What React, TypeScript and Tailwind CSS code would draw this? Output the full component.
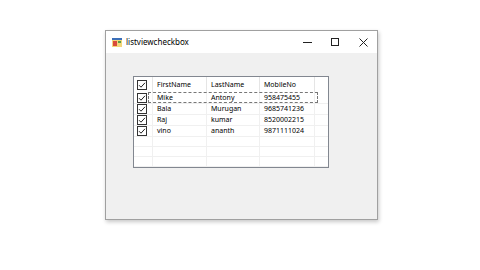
import React from 'react';

const rows = [
  ['Mike', 'Antony', '958475455'],
  ['Bala', 'Murugan', '9685741236'],
  ['Raj', 'kumar', '8520002215'],
  ['vino', 'ananth', '9871111024'],
];

const COLS = ['w-[19px]', 'w-[54px]', 'w-[53px]', 'w-[55px]'];

function Check() {
  return (
    <svg width="10" height="10" viewBox="0 0 10 10" className="block">
      <rect x="0.5" y="0.5" width="9" height="9" fill="#fff" stroke="#333" />
      <path d="M2 5.2 L4 7.2 L8 2.8" fill="none" stroke="#222" strokeWidth="1" />
    </svg>
  );
}

function Row({ cells, focus }: { cells: string[]; focus?: boolean }) {
  return (
    <div className="flex h-[11px] border-b border-[#f0f0f0] relative">
      <div className={`${COLS[0]} shrink-0 border-r border-[#f0f0f0] flex items-center pl-[3px]`}>
        <Check />
      </div>
      {cells.map((c, i) => (
        <div key={i} className={`${COLS[i + 1]} shrink-0 border-r border-[#f0f0f0] pl-[4px] leading-[10px] flex items-center`}>
          {c}
        </div>
      ))}
      {focus && (
        <div className="absolute left-[14px] top-[-1px] w-[170px] h-[11px] border border-dashed border-[#777]" />
      )}
    </div>
  );
}

function EmptyRow() {
  return (
    <div className="flex h-[10px] border-b border-[#f0f0f0]">
      {COLS.map((w, i) => (
        <div key={i} className={`${w} shrink-0 border-r border-[#f0f0f0]`} />
      ))}
    </div>
  );
}

export default function App() {
  return (
    <div
      className="w-[480px] h-[270px] bg-white pl-[105px] pt-[30px]"
      style={{ fontFamily: '"Noto Sans", "Open Sans", sans-serif' }}
    >
      <div className="w-[273px] h-[190px] border border-[#a0a0a0] bg-[#f0f0f0] shadow-[1px_2px_4px_rgba(0,0,0,0.22)] flex flex-col">
        {/* title bar */}
        <div className="h-[22px] bg-white flex items-center shrink-0">
          <svg width="10" height="9" viewBox="0 0 10 9" className="ml-[6px]">
            <rect x="0" y="0" width="10" height="9" fill="#f3d67a" />
            <rect x="0" y="0" width="10" height="2" fill="#3c6fb8" />
            <rect x="1" y="3" width="4" height="5" fill="#d94a3a" />
            <rect x="6" y="3" width="3" height="2" fill="#5a9e4a" />
          </svg>
          <span className="ml-[4px] text-[8px] text-black">listviewcheckbox</span>
          <div className="ml-auto flex h-full">
            <div className="w-[28px] flex items-center justify-center">
              <div className="w-[9px] h-px bg-[#222]" />
            </div>
            <div className="w-[28px] flex items-center justify-center">
              <div className="w-[8px] h-[8px] border border-[#222]" />
            </div>
            <div className="w-[28px] flex items-center justify-center">
              <svg width="9" height="9" viewBox="0 0 9 9">
                <path d="M0.5 0.5 L8.5 8.5 M8.5 0.5 L0.5 8.5" stroke="#222" strokeWidth="1" />
              </svg>
            </div>
          </div>
        </div>
        {/* body */}
        <div className="pl-[27px] pt-[23px]">
          <div className="w-[196px] h-[92px] border border-[#828790] bg-white overflow-hidden text-[7px] text-black">
            <div className="flex h-[16px]">
              <div className={`${COLS[0]} shrink-0 border-r border-[#e5e5e5] flex items-center pl-[3px]`}>
                <Check />
              </div>
              {['FirstName', 'LastName', 'MobileNo'].map((h, i) => (
                <div key={h} className={`${COLS[i + 1]} shrink-0 border-r border-[#e5e5e5] pl-[4px] flex items-center`}>
                  {h}
                </div>
              ))}
            </div>
            {rows.map((r, i) => (
              <Row key={i} cells={r} focus={i === 0} />
            ))}
            <EmptyRow />
            <EmptyRow />
            <EmptyRow />
            <EmptyRow />
          </div>
        </div>
      </div>
    </div>
  );
}
